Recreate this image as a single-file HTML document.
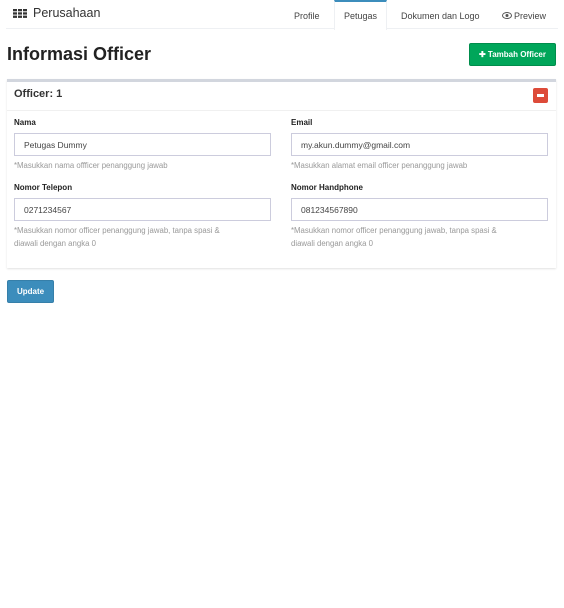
<!DOCTYPE html>
<html><head><style>
*{box-sizing:border-box;margin:0;padding:0}
body{width:564px;height:608px;background:#fff;font-family:"Liberation Sans",sans-serif;color:#333;position:relative;overflow:hidden}
.a{position:absolute}
.nav{left:6px;top:0;width:552px;height:29px;border-bottom:1px solid #eef0f3}
.tab{font-size:9px;color:#444;top:11px}
.lbl{font-size:8px;font-weight:bold;color:#222}
.inp{height:23px;border:1px solid #ccd;font-size:8.5px;color:#444;padding:6px 9px;width:257px}
.help{font-size:7.8px;color:#999;line-height:13px;width:245px}
</style></head><body>
<div class="a nav"></div>
<svg class="a" style="left:13px;top:9px" width="14" height="9"><g fill="#333"><rect x="0" y="0" width="4" height="2.3"/><rect x="5" y="0" width="4" height="2.3"/><rect x="10" y="0" width="4" height="2.3"/><rect x="0" y="3.3" width="4" height="2.3"/><rect x="5" y="3.3" width="4" height="2.3"/><rect x="10" y="3.3" width="4" height="2.3"/><rect x="0" y="6.6" width="4" height="2.3"/><rect x="5" y="6.6" width="4" height="2.3"/><rect x="10" y="6.6" width="4" height="2.3"/></g></svg>
<div class="a" style="left:33px;top:6px;font-size:12.5px;color:#333">Perusahaan</div>
<div class="a" style="left:334px;top:0;width:53px;height:30px;border-top:2px solid #3c8dbc;border-left:1px solid #eef0f3;border-right:1px solid #eef0f3;background:#fff"></div>
<div class="a tab" style="left:294px">Profile</div>
<div class="a tab" style="left:344px">Petugas</div>
<div class="a tab" style="left:401px">Dokumen dan Logo</div>
<svg class="a" style="left:502px;top:12px" width="10" height="7"><ellipse cx="5" cy="3.5" rx="4.5" ry="3" fill="none" stroke="#555" stroke-width="1"/><circle cx="5" cy="3.5" r="1.5" fill="#555"/></svg>
<div class="a tab" style="left:514px">Preview</div>
<div class="a" style="left:7px;top:44px;font-size:18px;font-weight:bold;color:#222">Informasi Officer</div>
<div class="a" style="left:469px;top:43px;width:87px;height:23px;background:#00a65a;border:1px solid #008d4c;border-radius:2px;color:#fff;font-size:8px;font-weight:bold;text-align:center;line-height:21px">✚ Tambah Officer</div>
<div class="a" style="left:7px;top:79px;width:549px;height:189px;border-top:3px solid #d2d6de;box-shadow:0 1px 2px rgba(0,0,0,.12)"></div>
<div class="a" style="left:7px;top:110px;width:549px;border-top:1px solid #f0f0f0"></div>
<div class="a" style="left:14px;top:88px;font-size:11px;font-weight:bold;color:#333">Officer: 1</div>
<div class="a" style="left:533px;top:88px;width:15px;height:15px;background:#dd4b39;border-radius:2px"><div class="a" style="left:4px;top:6px;width:7px;height:2.5px;background:#fff"></div></div>

<div class="a lbl" style="left:14px;top:118px">Nama</div>
<div class="a inp" style="left:14px;top:133px">Petugas Dummy</div>
<div class="a help" style="left:14px;top:159px">*Masukkan nama offficer penanggung jawab</div>
<div class="a lbl" style="left:14px;top:183px">Nomor Telepon</div>
<div class="a inp" style="left:14px;top:198px">0271234567</div>
<div class="a help" style="left:14px;top:224px">*Masukkan nomor officer penanggung jawab, tanpa spasi &amp;<br>diawali dengan angka 0</div>

<div class="a lbl" style="left:291px;top:118px">Email</div>
<div class="a inp" style="left:291px;top:133px">my.akun.dummy@gmail.com</div>
<div class="a help" style="left:291px;top:159px">*Masukkan alamat email officer penanggung jawab</div>
<div class="a lbl" style="left:291px;top:183px">Nomor Handphone</div>
<div class="a inp" style="left:291px;top:198px">081234567890</div>
<div class="a help" style="left:291px;top:224px">*Masukkan nomor officer penanggung jawab, tanpa spasi &amp;<br>diawali dengan angka 0</div>

<div class="a" style="left:7px;top:280px;width:47px;height:23px;background:#3c8dbc;border:1px solid #367fa9;border-radius:2px;color:#fff;font-size:8px;font-weight:bold;text-align:center;line-height:21px">Update</div>
</body></html>
